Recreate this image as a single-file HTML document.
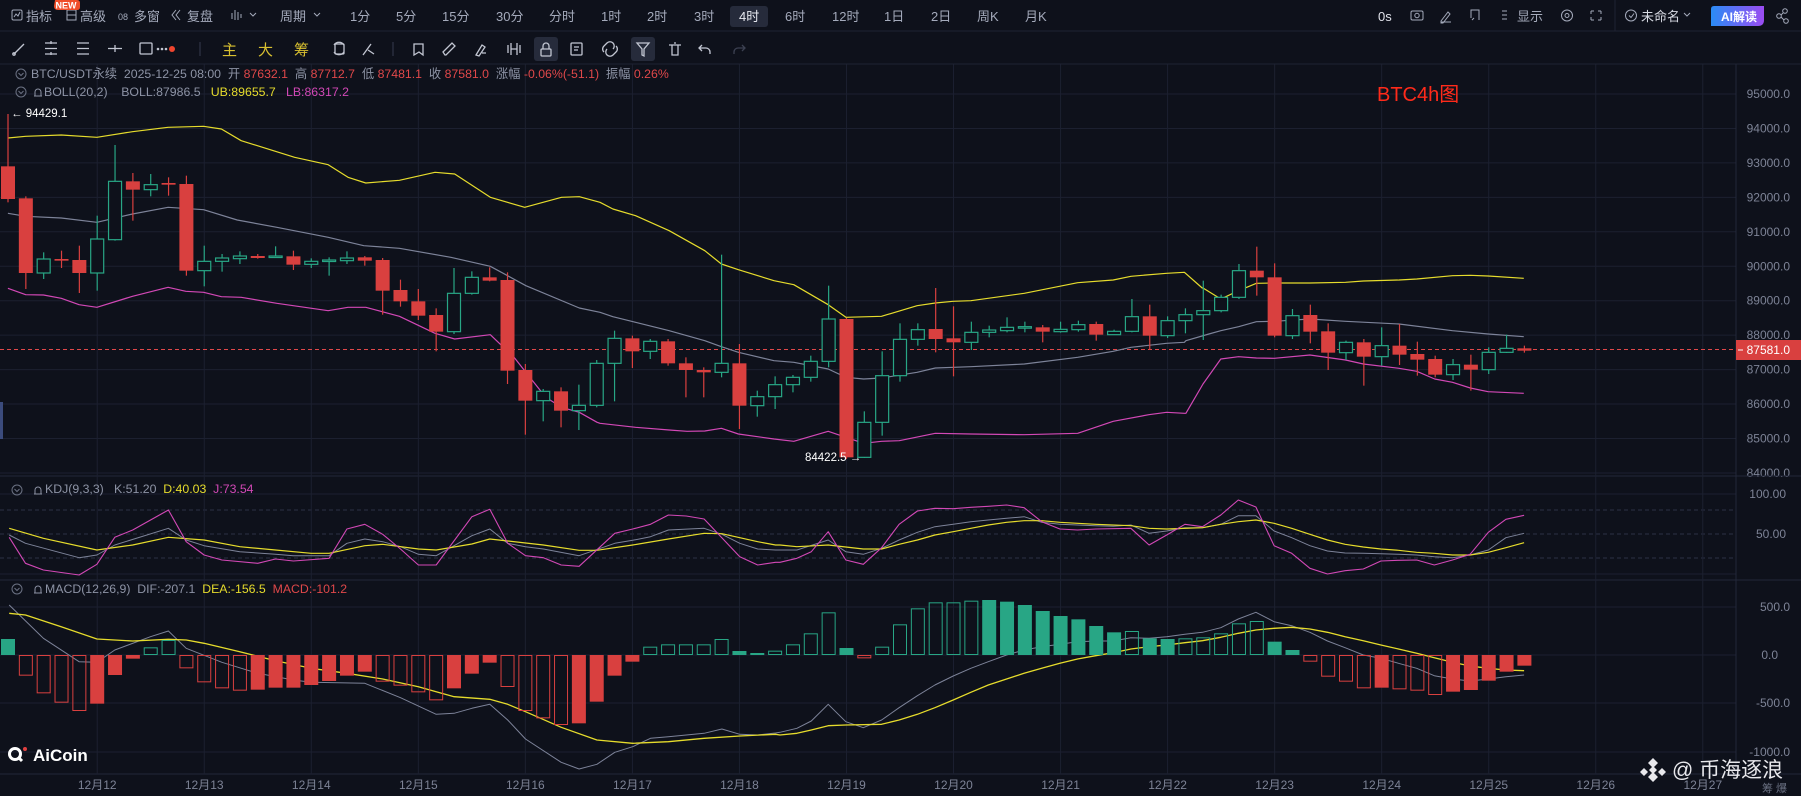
<!DOCTYPE html>
<html><head><meta charset="utf-8">
<style>
html,body{margin:0;padding:0;background:#0e111b;}
body{width:1801px;height:796px;overflow:hidden;position:relative;font-family:"Liberation Sans","Noto Sans CJK SC",sans-serif;}
svg{position:absolute;left:0;top:0;}
text{font-family:"Liberation Sans","Noto Sans CJK SC",sans-serif;white-space:pre;}
</style></head><body>
<svg id="s" width="1801" height="796" viewBox="0 0 1801 796" xmlns="http://www.w3.org/2000/svg" xml:space="preserve">
<rect width="1801" height="796" fill="#0e111b"/>
<g id="grid"></g>
<g id="lines"></g>
<g id="cand"></g>
<g id="ui">
<line x1="0" y1="31" x2="1801" y2="31" stroke="#1f2333"/>
<line x1="0" y1="64" x2="1801" y2="64" stroke="#1f2333"/>
<line x1="1615" y1="0" x2="1615" y2="31" stroke="#1f2333"/>
<g fill="#a4aabb" font-size="13">
<rect x="12" y="10" width="10" height="10" rx="1.5" fill="none" stroke="#a4aabb"/><path d="M14 17 l2-3 2 2 2-4" stroke="#a4aabb" fill="none"/>
<text x="26" y="21">指标</text>
<rect x="67" y="10" width="9" height="10" fill="none" stroke="#a4aabb"/><line x1="67" y1="15" x2="76" y2="15" stroke="#a4aabb"/>
<text x="80" y="21">高级</text>
<text x="118" y="20" font-size="9">08</text><text x="134" y="21">多窗</text>
<path d="M176 10 l-4 5 4 5 M180 10 l-4 5 4 5" stroke="#a4aabb" fill="none"/>
<text x="187" y="21">复盘</text>
<path d="M232 13v6 M235 10v10 M238 12v8 M241 14v4" stroke="#a4aabb"/>
<path d="M250 13 l3 3 3-3" stroke="#a4aabb" fill="none"/>
<text x="280" y="21">周期</text><path d="M314 13 l3 3 3-3" stroke="#a4aabb" fill="none"/>
<text x="350" y="21">1分</text><text x="396" y="21">5分</text><text x="442" y="21">15分</text><text x="496" y="21">30分</text>
<text x="549" y="21">分时</text><text x="601" y="21">1时</text><text x="647" y="21">2时</text><text x="694" y="21">3时</text>
<rect x="730" y="6" width="38" height="21" rx="3" fill="#262b3b"/>
<text x="739" y="21" fill="#e6e8ef">4时</text>
<text x="785" y="21">6时</text><text x="832" y="21">12时</text><text x="884" y="21">1日</text>
<text x="931" y="21">2日</text><text x="977" y="21">周K</text><text x="1025" y="21">月K</text>
<text x="1378" y="21" fill="#e0e2ea">0s</text>
<rect x="1411" y="11" width="12" height="9" rx="1.5" fill="none" stroke="#a4aabb"/><circle cx="1417" cy="15.5" r="2.2" fill="none" stroke="#a4aabb"/>
<path d="M1441 21 l7-9 2 2 -7 9 h-2z M1441 22 h10" stroke="#a4aabb" fill="none"/>
<path d="M1471 18 v-8 h8 v10 M1474 18 l-2 2" stroke="#a4aabb" fill="none"/>
<path d="M1502 11h5 M1502 15h5 M1502 19h5" stroke="#a4aabb"/>
<text x="1517" y="21">显示</text>
<circle cx="1567" cy="15.5" r="5.5" fill="none" stroke="#a4aabb"/><circle cx="1567" cy="15.5" r="2" fill="none" stroke="#a4aabb"/>
<path d="M1591 11h3 M1591 11v3 M1601 11h-3 M1601 11v3 M1591 20h3 M1591 20v-3 M1601 20h-3 M1601 20v-3" stroke="#a4aabb"/>
<circle cx="1631" cy="15.5" r="5.5" fill="none" stroke="#a4aabb"/><path d="M1629 15.5 l2 2 3-4" stroke="#a4aabb" fill="none"/>
<text x="1641" y="21" fill="#d6d9e2">未命名</text><path d="M1684 13 l3 3 3-3" stroke="#a4aabb" fill="none"/>
</g>
<defs><linearGradient id="ai" x1="0" x2="1"><stop offset="0" stop-color="#2a8cf5"/><stop offset="1" stop-color="#9b4cf2"/></linearGradient></defs>
<path d="M1714 6 h50 v14 q0 6 -6 6 h-47 v-17 q0-3 3-3z" fill="url(#ai)"/>
<text x="1739" y="21" font-size="12" fill="#fff" text-anchor="middle" font-weight="bold">AI解读</text>
<g stroke="#a4aabb" fill="none"><circle cx="1785" cy="11" r="2.3"/><circle cx="1779" cy="16" r="2.3"/><circle cx="1786" cy="21" r="2.3"/><path d="M1781 15 l2-2 M1781 17 l3 3"/></g>
<path d="M55 0 h22 q3 0 3 3 v4 q0 3 -3 3 h-19 q-4 0 -4 -4z" fill="#f04f2a"/>
<text x="66" y="8.5" font-size="9" fill="#fff" text-anchor="middle" font-weight="bold">NEW</text>
<g stroke="#c2c6d2" fill="none" stroke-width="1.3">
<path d="M14 54 l10-10"/><circle cx="14" cy="54" r="1.2"/>
<path d="M45 43h12 M45 48.5h12 M45 54h12 M51 41v3 M51 52v3"/>
<path d="M77 43h12 M77 48.5h12 M77 54h12"/>
<path d="M108 48.5h14 M115 45v7"/>
<rect x="140" y="43" width="12" height="11" rx="1"/>
<path d="M200 42 v14" stroke="#2e3344"/>
<path d="M334 45 a6 6 0 0 1 10 0 M334 52 a6 6 0 0 0 10 0"/><rect x="335" y="44" width="9" height="10" rx="1"/>
<path d="M363 55 l8-11 M368 50 l6 4"/>
<path d="M393 42 v14" stroke="#2e3344"/>
<path d="M414 44h9v11 l-4-3 -5 3z M414 44v8"/>
<path d="M445 55 l-2-3 9-9 3 3 -9 9z"/>
<path d="M476 55 l6-10 3 2 -6 9z M482 53 h4"/>
<path d="M508 45v8 M511 43v12 M517 43v12 M520 45v8 M511 49h6"/>
<path d="M604 52 a4 4 0 0 1 0-6 l3-3 a4 4 0 0 1 6 6 M616 46 a4 4 0 0 1 0 6 l-3 3 a4 4 0 0 1-6-6"/>
<path d="M669 45h12 M672 45v10h6v-10 M674 43h2"/>
<path d="M702 45 l-3 3 3 3 M699 48h7 a4 4 0 0 1 4 4v2"/>
<path d="M742 45 l3 3-3 3 M745 48h-7 a4 4 0 0 0-4 4v2" stroke="#3c4152"/>
<rect x="571" y="43" width="11" height="12" rx="1"/><path d="M574 47h5 M574 50h4"/>
</g>
<rect x="534" y="37" width="24" height="24" rx="3" fill="#262b3b"/>
<rect x="631" y="37" width="24" height="24" rx="3" fill="#262b3b"/>
<g stroke="#c2c6d2" fill="none" stroke-width="1.3">
<rect x="541" y="49" width="10" height="7" rx="1"/><path d="M543 49v-3 a3 3 0 0 1 6 0v3"/>
<path d="M637 43h12 l-5 6v7 l-2-1v-6z"/>
</g>
<circle cx="172" cy="49" r="3" fill="#f0452e"/>
<g fill="#c2c6d2"><circle cx="158" cy="49" r="1.3"/><circle cx="162" cy="49" r="1.3"/><circle cx="166" cy="49" r="1.3"/></g>
<g fill="#d8c030" font-size="15"><text x="222" y="55">主</text><text x="258" y="55">大</text><text x="294" y="55">筹</text></g>
<g font-size="12.3" fill="#8d93a5">
<circle cx="21" cy="74" r="5" fill="none" stroke="#6b7183"/><path d="M18.5 73 l2.5 2.5 2.5-2.5" stroke="#6b7183" fill="none"/>
<text x="31" y="78">BTC/USDT永续  2025-12-25 08:00  开 <tspan fill="#e0484a">87632.1</tspan>  高 <tspan fill="#e0484a">87712.7</tspan>  低 <tspan fill="#e0484a">87481.1</tspan>  收 <tspan fill="#e0484a">87581.0</tspan>  涨幅 <tspan fill="#e0484a">-0.06%(-51.1)</tspan>  振幅 <tspan fill="#e0484a">0.26%</tspan></text>
<circle cx="21" cy="92" r="5" fill="none" stroke="#6b7183"/><path d="M18.5 91 l2.5 2.5 2.5-2.5" stroke="#6b7183" fill="none"/>
<path d="M34 96 h8 M35 96 v-4 a3 3 0 0 1 6 0 v4" stroke="#8d93a5" fill="none"/>
<text x="44" y="96">BOLL(20,2)    BOLL:87986.5   <tspan fill="#e6dc2c">UB:89655.7</tspan>   <tspan fill="#d248b6">LB:86317.2</tspan></text>
<circle cx="17" cy="490" r="5" fill="none" stroke="#6b7183"/><path d="M14.5 489 l2.5 2.5 2.5-2.5" stroke="#6b7183" fill="none"/>
<path d="M34 494 h8 M35 494 v-4 a3 3 0 0 1 6 0 v4" stroke="#8d93a5" fill="none"/>
<text x="45" y="493">KDJ(9,3,3)   K:51.20  <tspan fill="#e6dc2c">D:40.03</tspan>  <tspan fill="#d248b6">J:73.54</tspan></text>
<circle cx="17" cy="589" r="5" fill="none" stroke="#6b7183"/><path d="M14.5 588 l2.5 2.5 2.5-2.5" stroke="#6b7183" fill="none"/>
<path d="M34 593 h8 M35 593 v-4 a3 3 0 0 1 6 0 v4" stroke="#8d93a5" fill="none"/>
<text x="45" y="593">MACD(12,26,9)  DIF:-207.1  <tspan fill="#e6dc2c">DEA:-156.5</tspan>  <tspan fill="#e0484a">MACD:-101.2</tspan></text>
</g>
<text x="1377" y="101" font-size="20" fill="#ff2a1a">BTC4h图</text>
<text x="11" y="117" font-size="11.5" fill="#ffffff">← 94429.1</text>
<text x="805" y="461" font-size="11.5" fill="#ffffff">84422.5 →</text>
<rect x="0" y="402" width="3" height="37" fill="#3b4b7c"/>
<g fill="#fff"><circle cx="15" cy="754" r="5.5" fill="none" stroke="#fff" stroke-width="3"/><path d="M18 757 l4 4" stroke="#fff" stroke-width="3"/><circle cx="25" cy="749" r="2" fill="#e04040"/>
<text x="33" y="761" font-size="17" font-weight="bold">AiCoin</text></g>
<g fill="#e8e8ec"><path d="M1653 758 l5 5 -5 5 -5 -5z M1653 772 l5 5 -5 5 -5 -5z M1644 768 l4 4 -4 4 -4 -4z M1662 768 l4 4 -4 4 -4 -4z"/><path d="M1653 766 l4 4 -4 4 -4 -4z"/></g>
<text x="1672" y="777" font-size="21" fill="#e8e8ec">@ 币海逐浪</text>
<text x="1762" y="792" font-size="11" fill="#6b7183">筹 爆</text>
</g>
</svg>
<script>
var S="http://www.w3.org/2000/svg";
function el(p,t,a,txt){var e=document.createElementNS(S,t);for(var k in a)e.setAttribute(k,a[k]);if(txt!=null)e.textContent=txt;document.getElementById(p).appendChild(e);return e;}
var AX=1736;
for(var k=0;k<=11;k++){var y=94+k*34.45;el('grid','line',{x1:0,x2:AX,y1:y,y2:y,stroke:'#1c2030'});el('grid','text',{x:1790,y:y+4,'font-size':12,fill:'#7d8396','text-anchor':'end'},(95000-1000*k).toFixed(1));}
[[494,'100.00'],[534,'50.00']].forEach(function(a){el('grid','text',{x:1786,y:a[0]+4,'font-size':12,fill:'#7d8396','text-anchor':'end'},a[1]);});
[494,574].forEach(function(y){el('grid','line',{x1:0,x2:AX,y1:y,y2:y,stroke:'#1c2030'});});
[510,534,558].forEach(function(y){el('grid','line',{x1:0,x2:AX,y1:y,y2:y,stroke:'#2c3146','stroke-dasharray':'4,3'});});
[[607,'500.0'],[655,'0.0'],[703,'-500.0'],[752,'-1000.0']].forEach(function(a){el('grid','line',{x1:0,x2:AX,y1:a[0],y2:a[0],stroke:'#1c2030'});el('grid','text',{x:a[1]=='0.0'?1778:1790,y:a[0]+4,'font-size':12,fill:'#7d8396','text-anchor':'end'},a[1]);});
[476,580,774].forEach(function(y){el('grid','line',{x1:0,x2:1801,y1:y,y2:y,stroke:'#23283a'});});
el('grid','line',{x1:AX,x2:AX,y1:64,y2:774,stroke:'#23283a'});
function cx(i){return 8+17.84*i;}
for(var d=0;d<16;d++){var x=cx(5+6*d);el('grid','line',{x1:x,x2:x,y1:64,y2:774,stroke:'#1c2030'});el('grid','text',{x:x,y:789,'font-size':12,fill:'#7d8396','text-anchor':'middle'},'12月'+(12+d));}
el('grid','line',{x1:0,x2:AX,y1:349.5,y2:349.5,stroke:'#e0484a','stroke-dasharray':'4,3'});
el('ui','rect',{x:1736,y:340,width:65,height:20,fill:'#d9403f'});
el('ui','text',{x:1790,y:354,'font-size':12,fill:'#fff','text-anchor':'end'},'87581.0');
el('ui','line',{x1:1738,x2:1743,y1:350,y2:350,stroke:'#fff'});
function Z(seg,pts,fx,fy){return pts.map(function(p){return [fx(p[0]),fy(p[1])];});}
var z3x=function(v){return v/2.529},z4x=function(v){return 600+v/2.529},z5x=function(v){return 1180+v/2.525},zy=function(v){return 64+v/3};
var z6x=function(v){return v/1.96},z7x=function(v){return 780+v/1.536},ky=function(v){return 475+v/3};
function poly(pts,c,w){el('lines','polyline',{points:pts.map(function(p){return p[0].toFixed(1)+','+p[1].toFixed(1)}).join(' '),fill:'none',stroke:c,'stroke-width':w||1.2,'stroke-linejoin':'round'});}
function cat(a3,a4,a5){return Z(0,a3,z3x,zy).concat(Z(0,a4,z4x,zy)).concat(Z(0,a5,z5x,zy)).sort(function(a,b){return a[0]-b[0]});}
var UB=cat([[20,222],[65,217],[155,213],[245,220],[335,203],[425,190],[515,187],[560,195],[610,230],[745,280],[830,302],[880,340],[925,357],[1010,349],[1100,325],[1150,330],[1240,400],[1327,430],[1420,400],[1465,398],[1550,435]],
[[0,415],[90,455],[175,500],[265,560],[307,600],[350,617],[440,650],[490,662],[577,722],[622,760],[712,757],[802,725],[848,717],[893,712],[938,710],[1073,688],[1208,656],[1298,648],[1343,637],[1433,628],[1478,625],[1523,672]],
[[58,672],[103,705],[148,680],[193,658],[238,657],[328,657],[418,655],[463,651],[553,648],[598,645],[688,635],[733,634],[778,636],[868,643]]);
var MB=cat([[20,448],[65,457],[155,462],[245,475],[335,450],[425,430],[515,437],[600,468],[700,490],[830,520],[920,545],[1010,553],[1140,580],[1240,607],[1330,665],[1465,732],[1550,758]],
[[0,745],[90,775],[175,800],[265,830],[307,848],[350,865],[440,890],[490,895],[577,915],[622,940],[667,945],[712,942],[802,925],[848,912],[938,908],[1073,900],[1208,880],[1298,862],[1343,850],[1433,838],[1478,835],[1540,810]],
[[15,830],[103,800],[148,788],[193,773],[238,772],[328,765],[418,772],[553,780],[688,800],[778,810],[868,818]]);
var LB=cat([[20,673],[65,692],[110,693],[155,703],[200,722],[245,730],[335,697],[425,670],[470,682],[515,685],[560,698],[610,700],[700,718],[830,740],[880,730],[925,730],[1010,757],[1100,808],[1150,825],[1240,812],[1300,880],[1380,1000],[1420,1030],[1465,1045],[1510,1075]],
[[0,1078],[90,1090],[175,1098],[220,1102],[265,1101],[307,1093],[350,1110],[440,1125],[490,1132],[577,1102],[622,1120],[667,1138],[712,1132],[757,1130],[848,1108],[938,1110],[1073,1112],[1208,1108],[1298,1072],[1388,1052],[1433,1045],[1478,1048]],
[[15,1048],[58,960],[103,885],[148,878],[193,882],[238,883],[328,873],[418,888],[463,900],[553,913],[598,922],[643,945],[688,955],[733,972],[778,983],[868,988]]);
poly(MB,'#7d8399');poly(UB,'#e6dc2c');poly(LB,'#d248b6');
function cat2(a6,a7){return Z(0,a6,z6x,ky).concat(Z(0,a7,z7x,ky)).sort(function(a,b){return a[0]-b[0]});}
var K=cat2([[18,180],[50,205],[155,248],[190,240],[225,210],[330,160],[365,195],[400,212],[470,230],[540,238],[575,242],[645,242],[680,205],[715,192],[750,200],[785,215],[820,238],[855,242],[925,182],[960,162],[995,205],[1030,215],[1065,222],[1135,242],[1205,205],[1240,196],[1275,185],[1310,165],[1380,160],[1415,178],[1450,205],[1485,222],[1520,225]],
[[0,225],[26,225],[74,195],[101,230],[128,238],[156,220],[183,195],[211,172],[238,155],[266,148],[293,140],[320,135],[348,130],[375,125],[402,142],[430,148],[457,150],[485,152],[512,154],[539,150],[567,175],[594,168],[622,158],[649,158],[677,148],[704,122],[731,122],[759,168],[786,188],[814,212],[841,228],[868,234],[896,235],[923,236],[950,238],[978,240],[1005,245],[1033,248],[1060,240],[1088,225],[1115,188],[1143,175]]);
var D=cat2([[18,160],[85,190],[190,225],[260,210],[330,187],[400,195],[470,215],[540,225],[610,235],[645,235],[715,212],[750,208],[820,222],[855,225],[925,207],[960,192],[995,198],[1065,210],[1135,226],[1170,226],[1240,210],[1310,192],[1380,175],[1415,176],[1485,200],[1520,210]],
[[0,210],[26,215],[74,210],[128,222],[156,222],[183,208],[211,195],[238,180],[266,170],[293,160],[320,150],[348,142],[375,137],[402,137],[430,142],[457,145],[485,148],[539,152],[567,160],[594,162],[649,158],[677,148],[704,140],[731,135],[759,145],[786,160],[814,178],[841,195],[868,208],[896,216],[923,222],[950,226],[978,232],[1005,235],[1033,240],[1060,240],[1088,232],[1115,218],[1143,203]]);
var J=cat2([[18,187],[50,265],[85,285],[155,300],[190,268],[225,187],[260,165],[330,105],[365,200],[400,240],[435,255],[505,265],[540,252],[575,258],[645,250],[680,162],[715,148],[750,178],[785,222],[820,270],[855,270],[925,125],[960,103],[995,205],[1030,242],[1065,248],[1100,270],[1135,274],[1205,175],[1240,162],[1275,148],[1310,120],[1345,123],[1380,132],[1450,245],[1485,270],[1520,262]],
[[0,262],[26,250],[48,230],[74,170],[101,255],[128,268],[156,218],[183,148],[211,108],[238,100],[266,101],[293,97],[320,94],[348,90],[375,98],[402,140],[430,162],[457,165],[485,162],[539,160],[567,210],[594,180],[622,148],[649,155],[677,120],[704,75],[731,96],[759,212],[786,235],[814,280],[841,297],[868,287],[896,282],[923,258],[950,256],[978,255],[1005,270],[1033,255],[1060,238],[1088,172],[1115,133],[1143,121]]);
poly(K,'#7d8399',1);poly(D,'#e6dc2c',1.2);poly(J,'#d248b6',1.1);
var H=[[492,'Gf'],[602,'Rh'],[655,'Rh'],[683,'Rh'],[708,'Rh'],[686,'Rf'],[600,'Rf'],[551,'Rf'],[517,'Gh'],[495,'Gh'],[580,'Rh'],[622,'Rh'],[640,'Rh'],[647,'Rh'],[644,'Rf'],[638,'Rf'],[638,'Rf'],[630,'Rf'],[618,'Rf'],[602,'Rf'],[590,'Rf'],[620,'Rh'],[632,'Rh'],[652,'Rh'],[676,'Rh'],[640,'Rf'],[596,'Rf'],[563,'Rf'],[636,'Rh'],[708,'Rh'],[730,'Rh'],[750,'Rh'],[745,'Rf'],[680,'Rf'],[602,'Rf'],[560,'Rf'],[515,'Gh'],[508,'Gh'],[508,'Gh'],[508,'Gh'],[492,'Gh'],[528,'Gf'],[534,'Gf'],[527,'Gh'],[508,'Gh'],
[475,'Gh'],[412,'Gh'],[519,'Gf'],[550,'Rh'],[515,'Gh'],[448,'Gh'],[400,'Gh'],[382,'Gh'],[382,'Gh'],[377,'Gh'],[375,'Gf'],[380,'Gf'],[390,'Gf'],[408,'Gf'],[423,'Gf'],[433,'Gf'],[453,'Gf'],[472,'Gf'],[468,'Gh'],[490,'Gf'],[492,'Gf'],[490,'Gh'],[487,'Gh'],[475,'Gh'],[445,'Gh'],[438,'Gh'],[500,'Gf'],[525,'Gf'],[560,'Rh'],[605,'Rh'],[620,'Rh'],[640,'Rh'],[638,'Rf'],[643,'Rh'],[647,'Rh'],[660,'Rh'],[650,'Rf'],[645,'Rf'],[617,'Rf'],[590,'Rf'],[572,'Rf']];
var RED='#d9403f',GRN='#28a685';
H.forEach(function(h,i){var x=cx(i),y=ky(h[0]),y0=655,t=Math.min(y,y0),hh=Math.max(Math.abs(y-y0),1.5);var c=h[1][0]=='R'?RED:GRN;
if(h[1][1]=='f')el('cand','rect',{x:x-7,y:t,width:14,height:hh,fill:c});else el('cand','rect',{x:x-6.5,y:t+0.5,width:13,height:Math.max(hh-1,1),fill:'none',stroke:c,'stroke-width':1});});
var DIF=cat2([[18,390],[85,490],[155,560],[190,562],[225,525],[295,485],[330,468],[365,520],[435,562],[505,595],[575,615],[610,622],[715,625],[785,668],[855,718],[890,715],[925,700],[960,688],[995,735],[1030,792],[1100,862],[1135,882],[1170,868],[1205,832],[1240,815],[1275,790],[1310,785],[1380,775],[1415,762],[1450,778],[1485,780],[1520,774]],
[[0,772],[26,760],[48,738],[74,688],[101,740],[128,758],[156,735],[183,698],[211,662],[238,630],[266,603],[293,580],[320,560],[348,540],[375,525],[402,515],[430,508],[457,500],[485,498],[512,498],[539,488],[567,490],[594,485],[622,478],[649,472],[677,458],[704,432],[731,412],[759,440],[786,452],[814,472],[841,498],[868,518],[896,540],[923,550],[950,565],[978,580],[1005,602],[1033,612],[1060,618],[1088,612],[1115,605],[1143,600]]);
var DEA=cat2([[18,415],[50,420],[120,455],[190,492],[260,498],[330,493],[365,495],[400,505],[470,530],[540,557],[610,580],[680,595],[750,612],[820,635],[855,650],[890,665],[960,673],[995,688],[1030,710],[1100,757],[1170,795],[1240,805],[1310,800],[1380,790],[1450,783],[1520,778]],
[[0,780],[26,775],[48,765],[74,752],[101,750],[156,748],[183,735],[211,718],[238,698],[266,675],[293,652],[320,630],[348,612],[375,595],[402,580],[430,565],[457,552],[485,542],[512,533],[539,522],[567,515],[594,510],[622,503],[649,497],[677,487],[704,475],[731,465],[759,460],[786,457],[814,462],[841,472],[868,485],[896,497],[923,510],[950,522],[978,535],[1005,548],[1033,562],[1060,573],[1088,580],[1115,585],[1143,587]]);
poly(DIF,'#7d8399',1);poly(DEA,'#e6dc2c',1.3);
var C=[[307,405,150,415,'R'],[403,627,397,675,'R'],[585,627,565,645,'G'],[585,590,560,612,'R'],[588,627,545,687,'R'],[525,627,455,680,'G'],[352,527,243,530,'G'],[352,377,327,470,'R'],[362,377,330,397,'G'],[357,362,340,395,'R'],
[360,620,335,635,'R'],[592,620,545,667,'G'],[582,592,570,623,'G'],[576,584,562,600,'G'],[576,582,570,584,'R'],[576,580,547,582,'G'],[577,602,560,618,'R'],[592,601,583,612,'G'],[588,592,580,635,'G'],[582,590,562,600,'G'],
[580,590,576,605,'R'],[588,680,582,752,'R'],[678,712,647,728,'R'],[712,755,675,768,'R'],[753,803,733,862,'R'],[688,803,612,810,'G'],[640,688,622,692,'G'],[640,650,610,652,'R'],[648,920,625,960,'R'],[918,1010,900,1112,'R'],
[982,1010,975,1072,'G'],[982,1040,970,1090,'R'],[1024,1040,962,1098,'G'],[898,1024,888,1030,'G'],[823,898,800,1012,'G'],[823,862,815,912,'R'],[832,862,825,885,'G'],[832,898,825,905,'R'],[898,918,880,1000,'R'],[918,925,910,1000,'R'],
[898,925,572,940,'G'],[898,1025,840,1095,'R'],[998,1025,980,1058,'G'],[962,998,937,1035,'G'],[940,962,933,985,'G'],[892,940,875,953,'G'],[765,892,665,910,'G'],[765,1180,762,1185,'R'],[1075,1180,1042,1182,'G'],[935,1075,862,1115,'G'],
[826,935,778,953,'G'],[797,826,778,845,'G'],[795,825,672,865,'R'],[823,835,727,937,'R'],[805,835,773,858,'G'],[798,805,785,820,'G'],[790,800,760,805,'G'],[788,791,773,805,'G'],[790,803,783,835,'R'],[796,803,773,806,'G'],
[782,797,770,803,'G'],[780,812,773,830,'R'],[802,812,797,813,'G'],[758,802,705,805,'G'],[757,815,722,858,'R'],[770,815,757,822,'G'],[752,770,733,808,'G'],[740,752,650,828,'G'],[700,740,692,745,'G'],[620,700,600,705,'G'],
[620,640,548,695,'R'],[640,815,598,820,'R'],[755,815,735,825,'G'],[753,803,722,838,'R'],[802,866,778,918,'R'],[835,866,830,888,'G'],[835,878,825,965,'R'],[845,878,790,905,'G'],[845,872,780,903,'R'],[870,887,833,935,'R'],
[885,932,875,940,'R'],[902,932,885,948,'G'],[902,917,872,980,'R'],[865,917,850,930,'G'],[853,865,812,867,'G'],[853,860,845,866,'R']];
C.forEach(function(c,i){var x=cx(i),t=zy(c[0]),b=zy(c[1]),h=zy(c[2]),l=zy(c[3]);var col=c[4]=='R'?RED:GRN;
if(c[4]=='R'){el('cand','line',{x1:x,x2:x,y1:h,y2:l,stroke:col,'stroke-width':1.2});el('cand','rect',{x:x-7,y:t,width:14,height:Math.max(b-t,1.5),fill:col});}
else{el('cand','line',{x1:x,x2:x,y1:h,y2:t,stroke:col,'stroke-width':1.2});el('cand','line',{x1:x,x2:x,y1:b,y2:l,stroke:col,'stroke-width':1.2});el('cand','rect',{x:x-6.5,y:t,width:13,height:Math.max(b-t,1.5),fill:'#0e111b',stroke:col,'stroke-width':1.2});}});
</script>
</body></html>
